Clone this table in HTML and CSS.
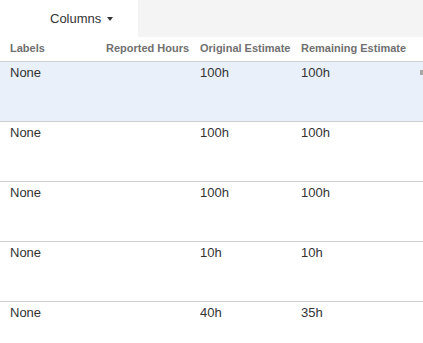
FILE: index.html
```html
<!DOCTYPE html>
<html>
<head>
<meta charset="utf-8">
<link rel="stylesheet" href="styles.css">
</head>
<body>
<div class="toolbar">
  <div class="tab"><span class="tab-label">Columns</span><span class="caret"></span></div>
  <div class="toolbar-fill"></div>
</div>
<table class="grid">
  <colgroup>
    <col class="c1"><col class="c2"><col class="c3"><col class="c4">
  </colgroup>
  <thead>
    <tr><th>Labels</th><th>Reported Hours</th><th>Original Estimate</th><th>Remaining Estimate</th></tr>
  </thead>
  <tbody>
    <tr class="selected"><td>None</td><td></td><td>100h</td><td class="last">100h<span class="handle"></span></td></tr>
    <tr><td>None</td><td></td><td>100h</td><td>100h</td></tr>
    <tr><td>None</td><td></td><td>100h</td><td>100h</td></tr>
    <tr><td>None</td><td></td><td>10h</td><td>10h</td></tr>
    <tr><td>None</td><td></td><td>40h</td><td>35h</td></tr>
  </tbody>
</table>
</body>
</html>
```

FILE: styles.css
```css
html, body {
  margin: 0;
  padding: 0;
  background: #fff;
  font-family: "Liberation Sans", Arial, Helvetica, sans-serif;
  color: #333;
  overflow: hidden;
}
.toolbar {
  display: flex;
  height: 37px;
}
.tab {
  width: 138px;
  display: flex;
  align-items: center;
  font-size: 13px;
  color: #333;
  padding-left: 50px;
  padding-bottom: 1px;
  box-sizing: border-box;
}
.caret {
  display: inline-block;
  width: 0;
  height: 0;
  border-left: 3.5px solid transparent;
  border-right: 3.5px solid transparent;
  border-top: 4px solid #333;
  margin-left: 6px;
  margin-top: 2px;
}
.toolbar-fill {
  flex: 1;
  background: #f4f4f4;
}
.grid {
  border-collapse: collapse;
  width: 423px;
  table-layout: fixed;
}
.c1 { width: 96px; }
.c2 { width: 94px; }
.c3 { width: 101px; }
.c4 { width: 132px; }
.grid th {
  text-align: left;
  font-size: 11px;
  font-weight: bold;
  color: #707070;
  padding: 5px 0 7px 10px;
  height: 11px;
  border-bottom: 1px solid #cfcfcf;
  white-space: nowrap;
}
.grid td {
  font-size: 13px;
  color: #333;
  vertical-align: top;
  padding: 3px 0 0 10px;
  height: 56px;
  border-bottom: 1px solid #cfcfcf;
}
.grid tbody tr:last-child td {
  border-bottom: none;
}
.selected td {
  background: #e9f0f9;
}
.last {
  position: relative;
}
.handle {
  position: absolute;
  right: 0;
  top: 8px;
  width: 3px;
  height: 5px;
  background: #a8a8a8;
}
```
